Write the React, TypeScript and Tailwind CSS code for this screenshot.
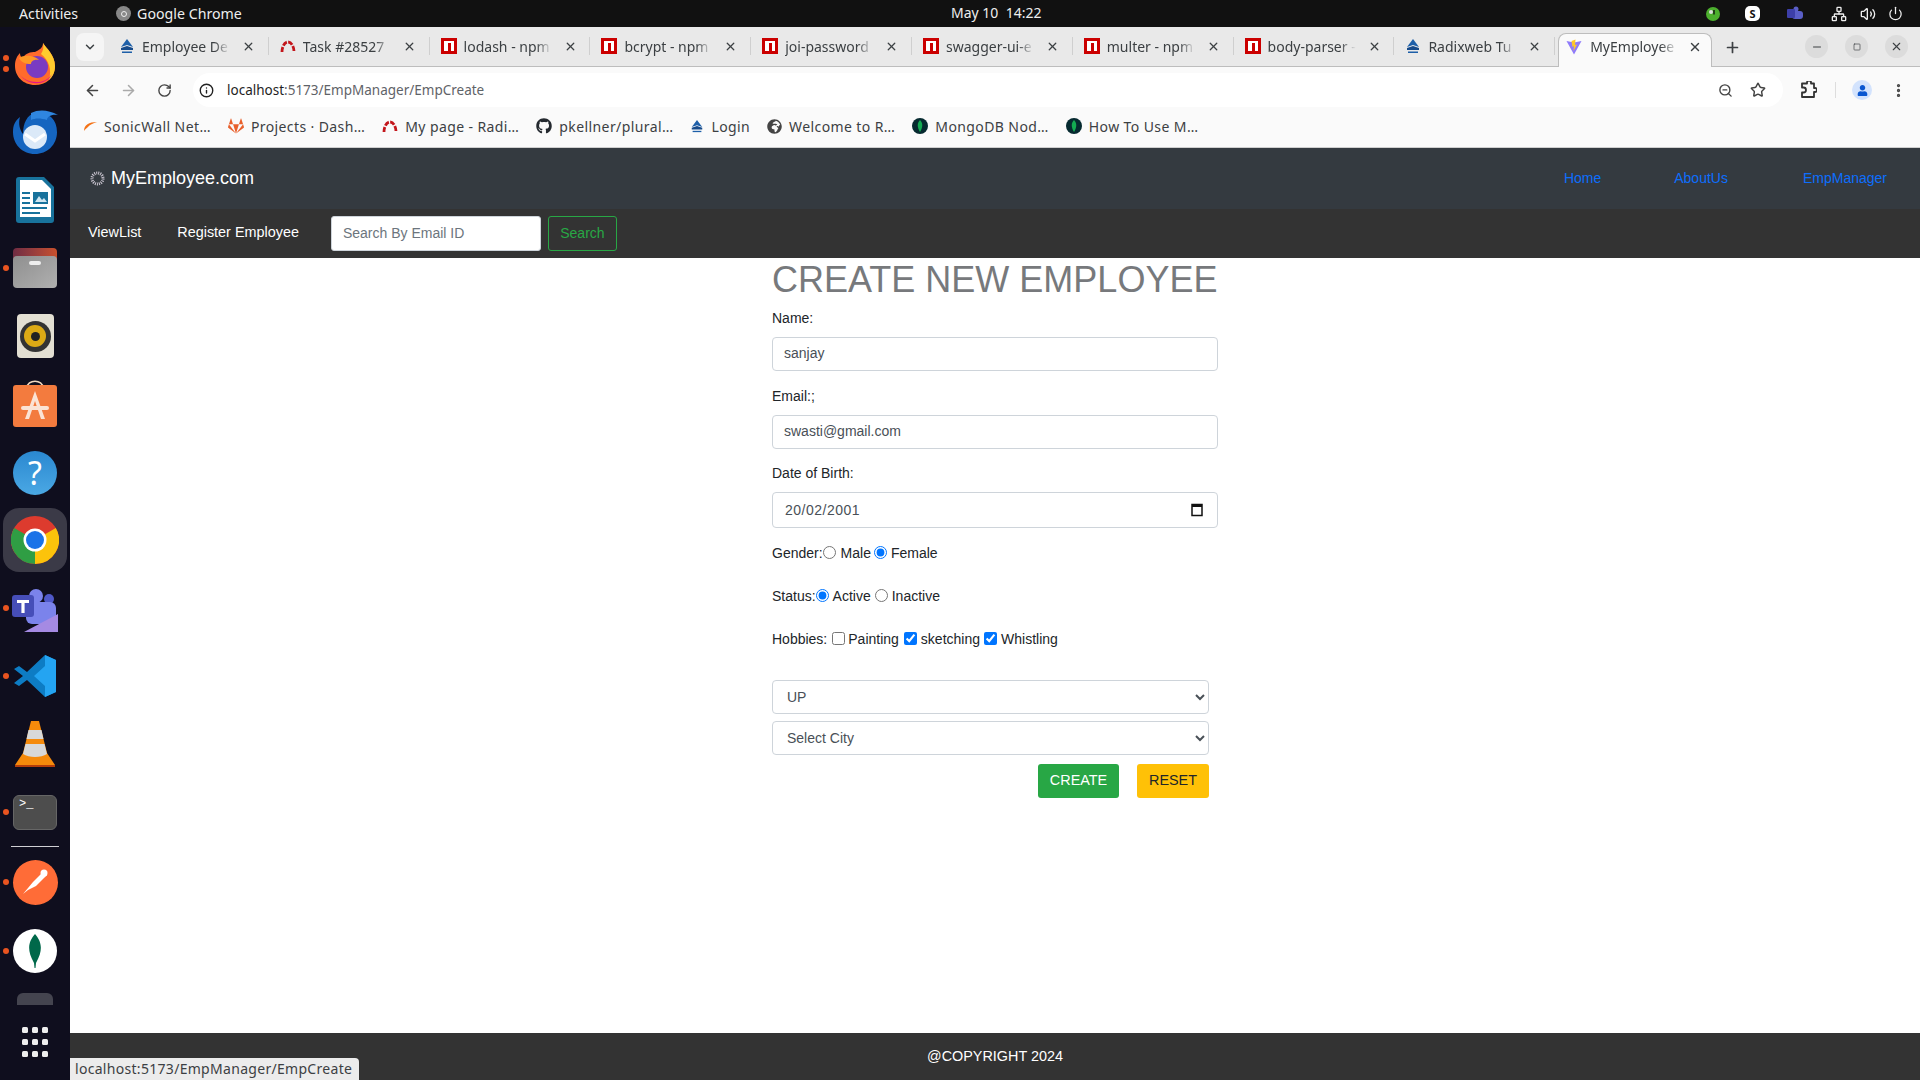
import { ReactNode } from "react"
import {
  ArrowLeft, ArrowRight, ChevronDown, EllipsisVertical, Info, Minus, Network, Plus, Power,
  RotateCw, Star, Volume2, X, ZoomOut, Square,
} from "lucide-react"
import { FaGithub, FaGitlab, FaGlobeAfrica, FaUser } from "react-icons/fa"

const uiFont = "font-['Noto_Sans',sans-serif]"

function Npm() {
  return (
    <svg width="16" height="16" viewBox="0 0 16 16" className="shrink-0">
      <rect width="16" height="16" fill="#cb0000" />
      <rect x="3" y="3" width="10" height="10" fill="#fff" />
      <rect x="7" y="5" width="3" height="8" fill="#cb0000" />
    </svg>
  )
}

function Radix({ size = 16 }: { size?: number }) {
  return (
    <svg width={size} height={size} viewBox="0 0 16 16" className="shrink-0">
      <path d="M8 1 L14 9 L8 7 L2 9 Z" fill="#1d5fa8" />
      <path d="M2 10 L8 8 L14 10 L14 12 L2 12 Z" fill="#164a8a" />
      <rect x="3" y="13.5" width="10" height="1.5" fill="#1d5fa8" />
    </svg>
  )
}

function RedArc() {
  return (
    <svg width="16" height="16" viewBox="0 0 16 16" className="shrink-0">
      <path d="M2 14 A6 10 0 0 1 14 14" fill="none" stroke="#c3161c" strokeWidth="2.8" strokeDasharray="5 1.4" />
    </svg>
  )
}

function Vite() {
  return (
    <svg width="16" height="16" viewBox="0 0 16 16" className="shrink-0">
      <path d="M0.5 2 L8 3.5 L15.5 2 L8 15.5 Z" fill="#8f7bfa" />
      <path d="M9.5 0.5 L5.5 2 L6.5 8 L8 7 L7.5 12 L11 5.5 L9 6 Z" fill="#ffc828" />
    </svg>
  )
}

function Leaf() {
  return (
    <span className="flex h-4 w-4 shrink-0 items-center justify-center rounded-full bg-[#062a30]">
      <svg width="8" height="12" viewBox="0 0 8 12">
        <path d="M4 0 C7 3 7 7 4 12 C1 7 1 3 4 0 Z" fill="#13aa52" />
      </svg>
    </span>
  )
}

const tabs: { title: string; icon: ReactNode }[] = [
  { title: "Employee De", icon: <Radix /> },
  { title: "Task #28527", icon: <RedArc /> },
  { title: "lodash - npm", icon: <Npm /> },
  { title: "bcrypt - npm", icon: <Npm /> },
  { title: "joi-password", icon: <Npm /> },
  { title: "swagger-ui-e", icon: <Npm /> },
  { title: "multer - npm", icon: <Npm /> },
  { title: "body-parser -", icon: <Npm /> },
  { title: "Radixweb Tu", icon: <Radix /> },
]

const bookmarks: { title: string; icon: ReactNode }[] = [
  {
    title: "SonicWall Net…",
    icon: (
      <svg width="14" height="14" viewBox="0 0 14 14" className="shrink-0">
        <path d="M1 12 C1 6 6 3 14 3 C9 5 6 6 5 8 C4 9 2 10 1 12 Z" fill="#f47216" />
      </svg>
    ),
  },
  { title: "Projects · Dash…", icon: <FaGitlab className="shrink-0 text-[#e8602c]" size={16} /> },
  { title: "My page - Radi…", icon: <RedArc /> },
  { title: "pkellner/plural…", icon: <FaGithub className="shrink-0 text-[#24292f]" size={16} /> },
  { title: "Login", icon: <Radix size={14} /> },
  { title: "Welcome to R…", icon: <FaGlobeAfrica className="shrink-0 text-[#444]" size={15} /> },
  { title: "MongoDB Nod…", icon: <Leaf /> },
  { title: "How To Use M…", icon: <Leaf /> },
]

function Dot() {
  return <span className="absolute left-[3px] top-1/2 h-[6px] w-[6px] -translate-y-1/2 rounded-full bg-[#e95420]" />
}

function Slot({ children, dot, h = "h-[68px]" }: { children: ReactNode; dot?: boolean; h?: string }) {
  return (
    <div className={`relative flex w-full shrink-0 items-center justify-center ${h}`}>
      {dot && <Dot />}
      {children}
    </div>
  )
}

function DockIcons() {
  return (
    <div className="flex w-[70px] shrink-0 flex-col overflow-hidden bg-[#0f0e1e] pt-[3px]">
      <Slot h="h-[68px]">
        <span className="absolute left-[3px] top-[25px] h-[6px] w-[6px] rounded-full bg-[#e95420]" />
        <span className="absolute left-[3px] top-[36px] h-[6px] w-[6px] rounded-full bg-[#e95420]" />
        <svg width="44" height="44" viewBox="0 0 44 44">
          <path d="M30 1 C33 6 42 13 42 24 C42 36 33 43 22 43 C10 43 2 34 2 24 C2 18 4 14 7 11 C7 14 8 15 10 16 C12 11 18 10 22 10 C26 8 30 6 30 1 Z" fill="#ff6b2c" />
          <path d="M30 1 C33 6 42 13 42 24 C42 30 40 34 36 38 C39 28 36 18 28 12 C30 9 31 5 30 1 Z" fill="#ffcb2e" />
          <path d="M4 28 C8 40 30 46 39 32 C34 44 12 46 4 28 Z" fill="#e31587" />
          <circle cx="24" cy="25" r="11" fill="#7a3bc2" />
          <path d="M6 16 C12 12 22 14 26 18 C20 17 18 20 18 22 C12 22 8 20 6 16 Z" fill="#ff9a26" />
        </svg>
      </Slot>
      <Slot>
        <svg width="48" height="48" viewBox="0 0 48 48">
          <path d="M24 5 C36 3 46 10 46 24 C46 37 36 46 24 46 C11 46 2 36 2 24 C2 17 4 13 9 9 C7 16 9 22 12 26 C12 15 16 7 24 5 Z" fill="#1565c0" />
          <path d="M20 5 C28 1 38 2 47 7 C40 6 36 9 36 12 C30 10 24 10 20 12 Z" fill="#2f86e0" />
          <circle cx="24" cy="29" r="12" fill="#dbe9f8" />
          <path d="M14 26 L24 33 L34 26" fill="none" stroke="#fff" strokeWidth="3" />
        </svg>
      </Slot>
      <Slot>
        <svg width="38" height="46" viewBox="0 0 38 46">
          <path d="M3 0 H28 L38 10 V43 A3 3 0 0 1 35 46 H3 A3 3 0 0 1 0 43 V3 A3 3 0 0 1 3 0 Z" fill="#18729c" />
          <path d="M4 3 H26 L35 12 V40 H4 Z" fill="#fff" />
          <rect x="6" y="15" width="8" height="2" fill="#18729c" />
          <rect x="6" y="20" width="8" height="2" fill="#18729c" />
          <rect x="6" y="25" width="8" height="2" fill="#18729c" />
          <rect x="6" y="30" width="25" height="2" fill="#18729c" />
          <rect x="6" y="35" width="18" height="2" fill="#18729c" />
          <rect x="17" y="15" width="15" height="12" fill="#18729c" />
          <path d="M19 25 L23 19 L26 23 L28 21 L31 25 Z" fill="#cfe6f1" />
        </svg>
      </Slot>
      <Slot dot>
        <div className="relative h-[40px] w-[44px]">
          <div className="absolute inset-x-0 top-0 h-[16px] rounded-t bg-gradient-to-r from-[#6f2c42] to-[#c9502b]" />
          <div className="absolute inset-x-0 bottom-0 flex h-[32px] justify-center rounded bg-gradient-to-br from-[#8f8f8f] to-[#b0b0b0] pt-[5px]">
            <span className="h-[4px] w-[12px] rounded-sm bg-[#eee]" />
          </div>
        </div>
      </Slot>
      <Slot>
        <div className="flex h-[44px] w-[37px] items-center justify-center rounded bg-[#e3dfd3]">
          <div className="flex h-[31px] w-[31px] items-center justify-center rounded-full bg-[#333] ">
            <div className="flex h-[22px] w-[22px] items-center justify-center rounded-full bg-[#dcaa15]">
              <div className="h-[9px] w-[9px] rounded-full bg-[#222]" />
            </div>
          </div>
        </div>
      </Slot>
      <Slot>
        <svg width="44" height="48" viewBox="0 0 44 48" className="-mt-[3px]">
          <path d="M14 9 C14 0 30 0 30 9" fill="none" stroke="#f0d8c0" strokeWidth="1.6" />
          <rect y="6" width="44" height="42" rx="3" fill="#f37b3e" />
          <path d="M22 12 L12 40 H16 L22 22 L28 40 H32 Z" fill="#fbe3d4" />
          <rect x="8" y="27" width="28" height="4" rx="2" fill="#fbe3d4" />
        </svg>
      </Slot>
      <Slot>
        <div className={`mt-[1px] flex h-[44px] w-[44px] items-center justify-center rounded-full bg-gradient-to-b from-[#2a88d0] to-[#4aa8e4] text-[32px] text-white ${uiFont}`}>?</div>
      </Slot>
      <Slot dot>
        <div className="absolute left-[3px] top-[2px] h-[64px] w-[64px] rounded-2xl bg-[#3b3a47]" />
        <svg width="48" height="48" viewBox="0 0 48 48" className="relative">
          <circle cx="24" cy="24" r="24" fill="#dd3b2e" />
          <path d="M24 24 L3.2 36 A24 24 0 0 1 3.2 12 L24 24 Z" fill="#dd3b2e" />
          <path d="M24 24 L3.2 12 A24 24 0 0 0 24 48 Z" fill="#2f9e44" />
          <path d="M24 24 L24 48 A24 24 0 0 0 44.8 12 Z" fill="#fcc30b" />
          <circle cx="24" cy="24" r="11.5" fill="#fff" />
          <circle cx="24" cy="24" r="9" fill="#1a73e8" />
        </svg>
      </Slot>
      <Slot dot>
        <svg width="46" height="44" viewBox="0 0 46 44" className="mt-[4px]">
          <circle cx="24" cy="8" r="7" fill="#7b83eb" />
          <circle cx="37" cy="11" r="5" fill="#5059c9" />
          <rect x="14" y="14" width="30" height="22" rx="6" fill="#7b83eb" />
          <rect y="7" width="22" height="22" rx="3" fill="#464eb8" />
          <path d="M5 12 H17 V15 H12.6 V25 H9.4 V15 H5 Z" fill="#fff" />
          <path d="M12 44 L46 26 V44 Z" fill="#a58ae3" />
        </svg>
      </Slot>
      <Slot dot>
        <svg width="42" height="42" viewBox="0 0 42 42">
          <path d="M31 0 L42 5 V37 L31 42 L13 25 L5 31 L0 28 L9 21 L0 14 L5 11 L13 17 Z" fill="#0d7cc4" />
          <path d="M31 0 L42 5 V37 L31 42 Z M31 11 L20 21 L31 31 Z" fill="#24a4f2" />
        </svg>
      </Slot>
      <Slot>
        <svg width="40" height="46" viewBox="0 0 40 46">
          <path d="M16 0 H24 L32 32 L40 44 H0 L8 32 Z" fill="#f58a0b" />
          <path d="M13.5 9 H26.5 L28.5 18 H11.5 Z" fill="#d8d8d8" />
          <path d="M10.5 23 H29.5 L32 33 C26 37 14 37 8 33 Z" fill="#d8d8d8" />
          <rect y="44" width="40" height="2" fill="#b53d0a" />
        </svg>
      </Slot>
      <Slot dot>
        <div className="h-[35px] w-[44px] rounded-md border border-[#666] bg-[#4d4d4d] pl-[5px] pt-[1px] font-['Liberation_Mono',monospace] text-[12px] leading-[14px] text-white">
          &gt;_
        </div>
      </Slot>
      <div className="mx-[11px] h-px shrink-0 bg-[#cfcfd4]" />
      <Slot dot h="h-[70px]">
        <div className="flex h-[45px] w-[45px] items-center justify-center rounded-full bg-[#ff6c37]">
          <svg width="30" height="30" viewBox="0 0 30 30">
            <path d="M3 27 L13 15 L21 7 L25 5 L27 8 L24 11 L16 19 L8 23 Z" fill="#fff" />
            <circle cx="24" cy="6" r="3.5" fill="#fff" />
          </svg>
        </div>
      </Slot>
      <Slot dot>
        <div className="flex h-[44px] w-[44px] items-center justify-center rounded-full bg-white">
          <svg width="16" height="34" viewBox="0 0 16 34">
            <path d="M8 0 C14 7 17 15 9 29 L8.5 34 H7.5 L7 29 C-1 15 2 7 8 0 Z" fill="#00684a" />
          </svg>
        </div>
      </Slot>
      <div className="mt-[8px] flex h-[12px] w-full shrink-0 justify-center">
        <div className="h-[12px] w-[36px] rounded-t-md bg-[#44444f]" />
      </div>
      <div className="mt-[22px] grid w-full shrink-0 grid-cols-3 justify-items-center gap-y-[6px] px-[20px]">
        {Array.from({ length: 9 }).map((_, i) => (
          <span key={i} className="h-[6px] w-[6px] rounded-[1.5px] bg-[#eee]" />
        ))}
      </div>
    </div>
  )
}

function TopBar() {
  return (
    <div className={`relative flex h-[27px] shrink-0 items-center bg-[#111111] text-[14.2px] text-[#eeeeee] ${uiFont}`}>
      <span className="ml-[19px]">Activities</span>
      <span className="ml-[38px] flex h-[15px] w-[15px] items-center justify-center rounded-full bg-[#888]">
        <span className="h-[6px] w-[6px] rounded-full border border-[#eee]" />
      </span>
      <span className="ml-[6px]">Google Chrome</span>
      <span className="flex-1" />
      <span className="absolute left-[951px] top-[2px] text-[14px]">May 10&nbsp; 14:22</span>
      <svg width="14" height="14" viewBox="0 0 14 14" className="mr-[25px]">
        <circle cx="7" cy="7" r="7" fill="#4caf2e" />
        <circle cx="5" cy="5" r="2" fill="#ddd" />
        <path d="M8 3 V7.5" stroke="#111" strokeWidth="1.4" />
      </svg>
      <span className="mr-[27px] flex h-[15px] w-[15px] items-center justify-center rounded-[5px] bg-white text-[11px] font-bold leading-none text-[#111]">S</span>
      <svg width="16" height="15" viewBox="0 0 16 15" className="mr-[28px]">
        <circle cx="9" cy="3" r="2.5" fill="#5b5fc7" />
        <rect x="5" y="5" width="11" height="8" rx="3" fill="#5b5fc7" />
        <rect y="3" width="8" height="9" rx="1" fill="#3d3fa8" />
      </svg>
      <Network size={16} className="mr-[13px]" />
      <Volume2 size={16} className="mr-[12px]" />
      <Power size={15} className="mr-[17px]" />
    </div>
  )
}

function TabStrip() {
  return (
    <div className={`flex h-[40px] shrink-0 items-end border-b border-[#bdbdbd] bg-[#e9e9e9] pl-[6px] text-[14px] text-[#3c4043] ${uiFont}`}>
      <div className="mb-[5px] mr-[4px] flex h-[28px] w-[28px] items-center justify-center rounded-lg bg-[#f5f5f5]">
        <ChevronDown size={14} strokeWidth={2.5} />
      </div>
      {tabs.map((t) => (
        <div key={t.title} className="flex h-[33px] w-[160.8px] shrink-0 items-center pb-[7px] pl-[11px]">
          {t.icon}
          <span className="ml-[7px] w-[88px] overflow-hidden whitespace-nowrap [mask-image:linear-gradient(to_right,black_82%,transparent)]">
            {t.title}
          </span>
          <X size={13} strokeWidth={2.4} className="ml-[12px]" />
          <span className="ml-auto h-[18px] w-px bg-[#cfcfcf]" />
        </div>
      ))}
      <div className="relative -mb-px ml-[3px] flex h-[34px] w-[154px] shrink-0 items-center rounded-t-lg border-x border-t border-[#bdbdbd] bg-[#fafafa] pb-[8px] pl-[7px]">
        <Vite />
        <span className="ml-[8px] w-[88px] overflow-hidden whitespace-nowrap [mask-image:linear-gradient(to_right,black_80%,transparent)]">
          MyEmployee
        </span>
        <X size={14} strokeWidth={2.4} className="ml-[10px]" />
      </div>
      <Plus size={17} strokeWidth={2.4} className="mb-[10px] ml-[12px]" />
      <div className="mb-[8px] ml-[64px] flex h-[23px] w-[23px] items-center justify-center rounded-full bg-[#dcdcdc]">
        <Minus size={12} strokeWidth={2} />
      </div>
      <div className="mb-[8px] ml-[17px] flex h-[23px] w-[23px] items-center justify-center rounded-full bg-[#dcdcdc]">
        <Square size={8} strokeWidth={2} />
      </div>
      <div className="mb-[8px] ml-[17px] flex h-[23px] w-[23px] items-center justify-center rounded-full bg-[#dcdcdc]">
        <X size={13} strokeWidth={2} />
      </div>
    </div>
  )
}

function Toolbar() {
  return (
    <div className={`flex h-[40px] shrink-0 items-end bg-[#fafafa] pl-[14px] text-[#444] ${uiFont}`}>
      <div className="flex h-[34px] items-center">
        <ArrowLeft size={17} strokeWidth={2.2} />
        <ArrowRight size={17} strokeWidth={2.2} className="ml-[19px] text-[#aaa]" />
        <RotateCw size={15} strokeWidth={2.2} className="ml-[20px]" />
      </div>
      <div className="ml-[21px] flex h-[34px] w-[1590px] items-center rounded-full bg-white pl-[6px]">
        <Info size={15} strokeWidth={2.2} className="text-[#222]" />
        <span className="ml-[13px] text-[13.5px] text-[#5f6368]">
          <span className="text-[#1f1f1f]">localhost</span>:5173/EmpManager/EmpCreate
        </span>
        <span className="flex-1" />
        <ZoomOut size={15} strokeWidth={2.2} className="mr-[17px]" />
        <Star size={16} strokeWidth={2.2} className="mr-[17px]" />
      </div>
      <div className="flex h-[34px] items-center">
        <svg width="18" height="18" viewBox="0 0 18 18" className="ml-[16px]" fill="none" stroke="#333" strokeWidth="1.8" strokeLinejoin="round">
          <path d="M3 2.5 H8 V1.5 A2 2 0 0 1 12 1.5 V2.5 H15 V7 H16 A2 2 0 0 1 16 11 H15 V16 H3 V11.5 H4.5 A2.5 2.5 0 0 0 4.5 6.5 H3 Z" />
        </svg>
        <span className="ml-[18px] h-[16px] w-px bg-[#ddd]" />
        <span className="ml-[16px] flex h-[20px] w-[20px] items-center justify-center rounded-full bg-[#d3e3fd] text-[#0b57d0]">
          <FaUser size={11} />
        </span>
        <EllipsisVertical size={17} strokeWidth={2.6} className="ml-[18px]" />
      </div>
    </div>
  )
}

function Bookmarks() {
  return (
    <div className={`flex h-[41px] shrink-0 items-center gap-[17px] border-b border-[#cfcfcf] bg-[#fafafa] pb-[2px] pl-[13px] text-[14px] tracking-[0.4px] text-[#3c4043] ${uiFont}`}>
      {bookmarks.map((b) => (
        <div key={b.title} className="flex items-center gap-[7px] whitespace-nowrap">
          {b.icon}
          <span>{b.title}</span>
        </div>
      ))}
    </div>
  )
}

function SiteNav() {
  return (
    <>
      <div className="flex h-[61px] shrink-0 items-center bg-[#343a40] pl-[20px] text-[14px]">
        <svg width="15" height="15" viewBox="0 0 15 15">
          <circle cx="7.5" cy="7.5" r="5.5" fill="none" stroke="#c9c4cf" strokeWidth="3" strokeDasharray="1 1" />
        </svg>
        <span className="ml-[6px] text-[18px] text-white">MyEmployee.com</span>
        <span className="flex-1" />
        <a className="text-[#0d6efd]">Home</a>
        <a className="ml-[73px] text-[#0d6efd]">AboutUs</a>
        <a className="ml-[75px] mr-[33px] text-[#0d6efd]">EmpManager</a>
      </div>
      <div className="flex h-[49px] shrink-0 items-center bg-[#333333] pl-[18px] text-[14.4px] text-white">
        <a className="-mt-[2px]">ViewList</a>
        <a className="-mt-[2px] ml-[36px]">Register Employee</a>
        <input
          readOnly
          placeholder="Search By Email ID"
          className="ml-[32px] h-[35px] w-[210px] rounded-[3px] border border-[#ced4da] bg-white pb-[2px] pl-[11px] pr-[12px] text-[14px] text-[#495057] placeholder:text-[#6c757d]"
        />
        <button className="ml-[7px] h-[35px] w-[69px] rounded-[3px] border border-[#28a745] pb-[1px] text-[14px] text-[#28a745]">Search</button>
      </div>
    </>
  )
}

const inputCls = "block h-[34px] w-full rounded-[4px] border border-[#ced4da] bg-white pb-[3px] pl-[11px] pr-[12px] text-[14px] text-[#495057]"
const selectCls = "block h-[34px] w-full rounded-[4px] border border-[#ced4da] bg-white px-[10px] text-[14px] text-[#495057]"
const tickCls = "h-[13px] w-[13px] -translate-y-px"

function EmpForm() {
  return (
    <form className="mx-auto w-[446px] text-[14px] text-[#212529]">
      <h1 className="h-[44px] whitespace-nowrap pt-[2px] text-[36px] leading-[39px] text-[#77797c]">CREATE NEW EMPLOYEE</h1>
      <label className="mt-[6px] block leading-[20px]">Name:</label>
      <input readOnly value="sanjay" className={`mt-[9px] ${inputCls}`} />
      <label className="mt-[15px] block leading-[20px]">Email:;</label>
      <input readOnly value="swasti@gmail.com" className={`mt-[9px] ${inputCls}`} />
      <label className="mt-[14px] block leading-[20px]">Date of Birth:</label>
      <div className={`mt-[9px] flex !h-[36px] items-center justify-between !pb-0 ${inputCls}`}>
        <span className="ml-[1px] tracking-[0.5px]">20/02/2001</span>
        <svg width="14" height="14" viewBox="0 0 14 14" className="mr-[1px]">
          <path d="M2 1.5 H12 V12.5 H2 Z" fill="none" stroke="#111" strokeWidth="1.5" />
          <rect x="2" y="1" width="10" height="3" fill="#111" />
        </svg>
      </div>
      <div className="mt-[15px] flex h-[20px] items-center">
        Gender:<input readOnly type="radio" name="g" className={tickCls} />
        <span className="ml-[5px]">Male</span>
        <input readOnly type="radio" name="g" checked className={`ml-[3px] ${tickCls}`} />
        <span className="ml-[4px]">Female</span>
      </div>
      <div className="mt-[23px] flex h-[20px] items-center">
        Status:<input readOnly type="radio" name="s" checked className={tickCls} />
        <span className="ml-[4px]">Active</span>
        <input readOnly type="radio" name="s" className={`ml-[4px] ${tickCls}`} />
        <span className="ml-[4px]">Inactive</span>
      </div>
      <div className="mt-[23px] flex h-[20px] items-center">
        Hobbies:<input readOnly type="checkbox" className={`ml-[5px] ${tickCls}`} />
        <span className="ml-[3px]">Painting</span>
        <input readOnly type="checkbox" checked className={`ml-[5px] ${tickCls}`} />
        <span className="ml-[4px]">sketching</span>
        <input readOnly type="checkbox" checked className={`ml-[4px] ${tickCls}`} />
        <span className="ml-[4px]">Whistling</span>
      </div>
      <div className="mt-[31px] w-[437px]">
        <select value="UP" onChange={() => {}} className={selectCls}>
          <option>UP</option>
        </select>
        <select value="Select City" onChange={() => {}} className={`mt-[7px] ${selectCls}`}>
          <option>Select City</option>
        </select>
        <div className="mt-[9px] flex justify-end gap-[18px] text-[14.4px]">
          <button type="button" className="h-[34px] w-[81px] rounded-[3px] bg-[#28a745] pb-[1px] text-white">CREATE</button>
          <button type="button" className="h-[34px] w-[72px] rounded-[3px] bg-[#ffc107] pb-[1px] text-[#212529]">RESET</button>
        </div>
      </div>
    </form>
  )
}

export default function App() {
  return (
    <div className="flex h-screen w-full flex-col overflow-hidden font-['Liberation_Sans',Arial,sans-serif]">
      <TopBar />
      <div className="flex min-h-0 flex-1">
        <DockIcons />
        <div className="relative flex min-w-0 flex-1 flex-col">
          <TabStrip />
          <Toolbar />
          <Bookmarks />
          <SiteNav />
          <main className="min-h-0 flex-1 bg-white">
            <EmpForm />
          </main>
          <footer className="flex h-[47px] shrink-0 items-center justify-center bg-[#333333] text-[14.4px] text-white">
            @COPYRIGHT 2024
          </footer>
          <div className={`absolute bottom-0 left-0 flex h-[22px] w-[289px] items-center rounded-tr-sm bg-[#ececec] pb-[2px] pl-[5px] text-[14px] tracking-[0.3px] text-[#3c4043] ${uiFont}`}>
            localhost:5173/EmpManager/EmpCreate
          </div>
        </div>
      </div>
    </div>
  )
}
